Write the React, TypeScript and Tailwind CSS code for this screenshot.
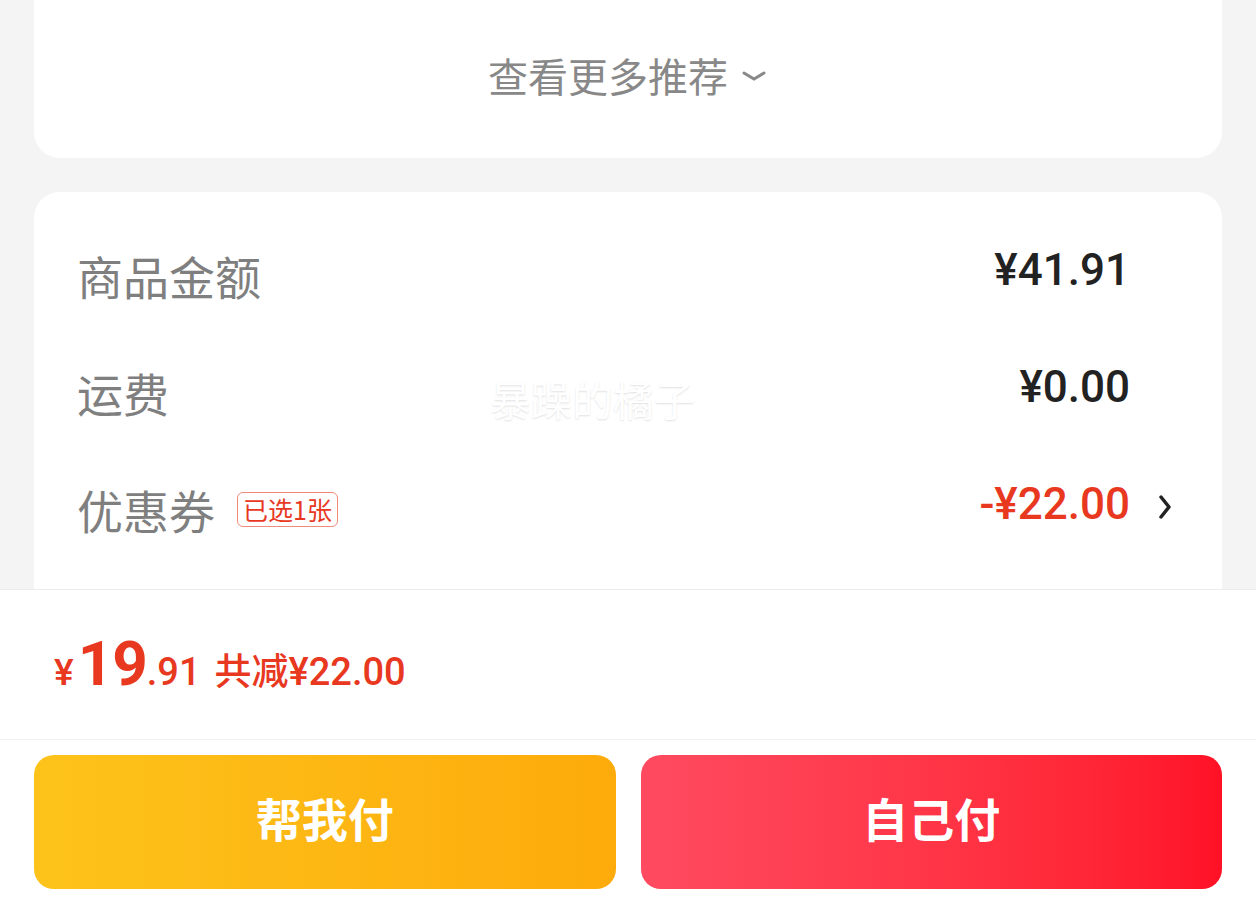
import React from "react";

const RED = "text-[#e8381f]";

function Chevron({ className }: { className?: string }) {
  return (
    <svg className={className} viewBox="0 0 14 30" fill="none" stroke="currentColor" strokeWidth="3.5" strokeLinecap="round" strokeLinejoin="round">
      <path d="M3 5l8 10-8 10" />
    </svg>
  );
}

function FeeRow({
  label,
  value,
  red,
  badge,
  arrow,
}: {
  label: string;
  value: string;
  red?: boolean;
  badge?: string;
  arrow?: boolean;
}) {
  return (
    <div className="h-[117px] flex items-center justify-between">
      <div className="flex items-center gap-[22px] -mt-[8px]">
        <span className="text-[46px] leading-none text-[#7f7f7f]">{label}</span>
        {badge && (
          <span className={`mt-[2px] px-[5px] h-[35px] flex items-center rounded-[6px] border border-[#f08a7a] text-[25px] leading-none ${RED}`}>
            {badge}
          </span>
        )}
      </div>
      <div className="flex items-center -mt-[8px]">
        <span
          className={`-mt-[10px] text-[44px] leading-none font-medium font-['Roboto'] ${
            red ? RED : "text-[#222]"
          }`}
        >
          {value}
        </span>
        <div className="w-[42px] flex justify-end">
          {arrow && <Chevron className="w-[14px] h-[30px] -mt-[4px] text-[#222]" />}
        </div>
      </div>
    </div>
  );
}

export default function App() {
  return (
    <div className="relative w-[1256px] h-[902px] bg-[#f4f4f4] flex flex-col overflow-hidden font-['Noto_Sans_CJK_SC','Noto_Sans',sans-serif]">
      {/* Scroll area */}
      <div className="flex-1 min-h-0 overflow-hidden px-[34px] flex flex-col gap-[34px]">
        <div className="-mt-[40px] h-[198px] shrink-0 bg-white rounded-[26px] flex items-end justify-center pb-[63px]">
          <div className="flex items-center gap-[12px] text-[#888]">
            <span className="text-[40px] leading-none">查看更多推荐</span>
            <svg className="w-[28px] h-[14px] mt-[2px]" viewBox="0 0 28 14" fill="none" stroke="currentColor" strokeWidth="3" strokeLinecap="round">
              <path d="M4 4l10 6 10-6" />
            </svg>
          </div>
        </div>

        <div className="shrink-0 bg-white rounded-t-[26px] pt-[28px] pl-[43px] pr-[50px]">
          <FeeRow label="商品金额" value="¥41.91" />
          <FeeRow label="运费" value="¥0.00" />
          <FeeRow label="优惠券" value="-¥22.00" red badge="已选1张" arrow />
          <div className="h-[60px]" />
        </div>
      </div>

      {/* Watermark */}
      <div className="absolute left-[490px] top-[378px] text-[41px] leading-none text-white [text-shadow:0_1px_2px_rgba(0,0,0,0.12)] pointer-events-none">
        暴躁的橘子
      </div>

      {/* Bottom bar */}
      <div className="h-[313px] shrink-0 bg-white border-t border-[#ebebeb] flex flex-col">
        <div className="h-[150px] flex items-center pl-[54px] border-b border-[#f0f0f0]">
          <div className={`flex items-baseline font-['Roboto'] ${RED} mt-[4px]`}>
            <span className="text-[37px] font-medium">¥</span>
            <span className="text-[62px] font-bold leading-none ml-[4px] tracking-[-1px]">19</span>
            <span className="text-[38px] font-medium">.91</span>
            <span className="ml-[14px] text-[37px] font-medium font-['Noto_Sans_CJK_SC']">共减</span>
            <span className="text-[38px] font-medium">¥22.00</span>
          </div>
        </div>
        <div className="flex gap-[25px] px-[34px] pt-[15px]">
          <button className="flex-1 h-[134px] pb-[10px] rounded-[20px] bg-gradient-to-r from-[#fdc31b] to-[#fdab0b] text-white text-[46px] font-bold">
            帮我付
          </button>
          <button className="flex-1 h-[134px] pb-[10px] rounded-[20px] bg-gradient-to-r from-[#ff4a60] to-[#ff1126] text-white text-[46px] font-bold">
            自己付
          </button>
        </div>
      </div>
    </div>
  );
}
